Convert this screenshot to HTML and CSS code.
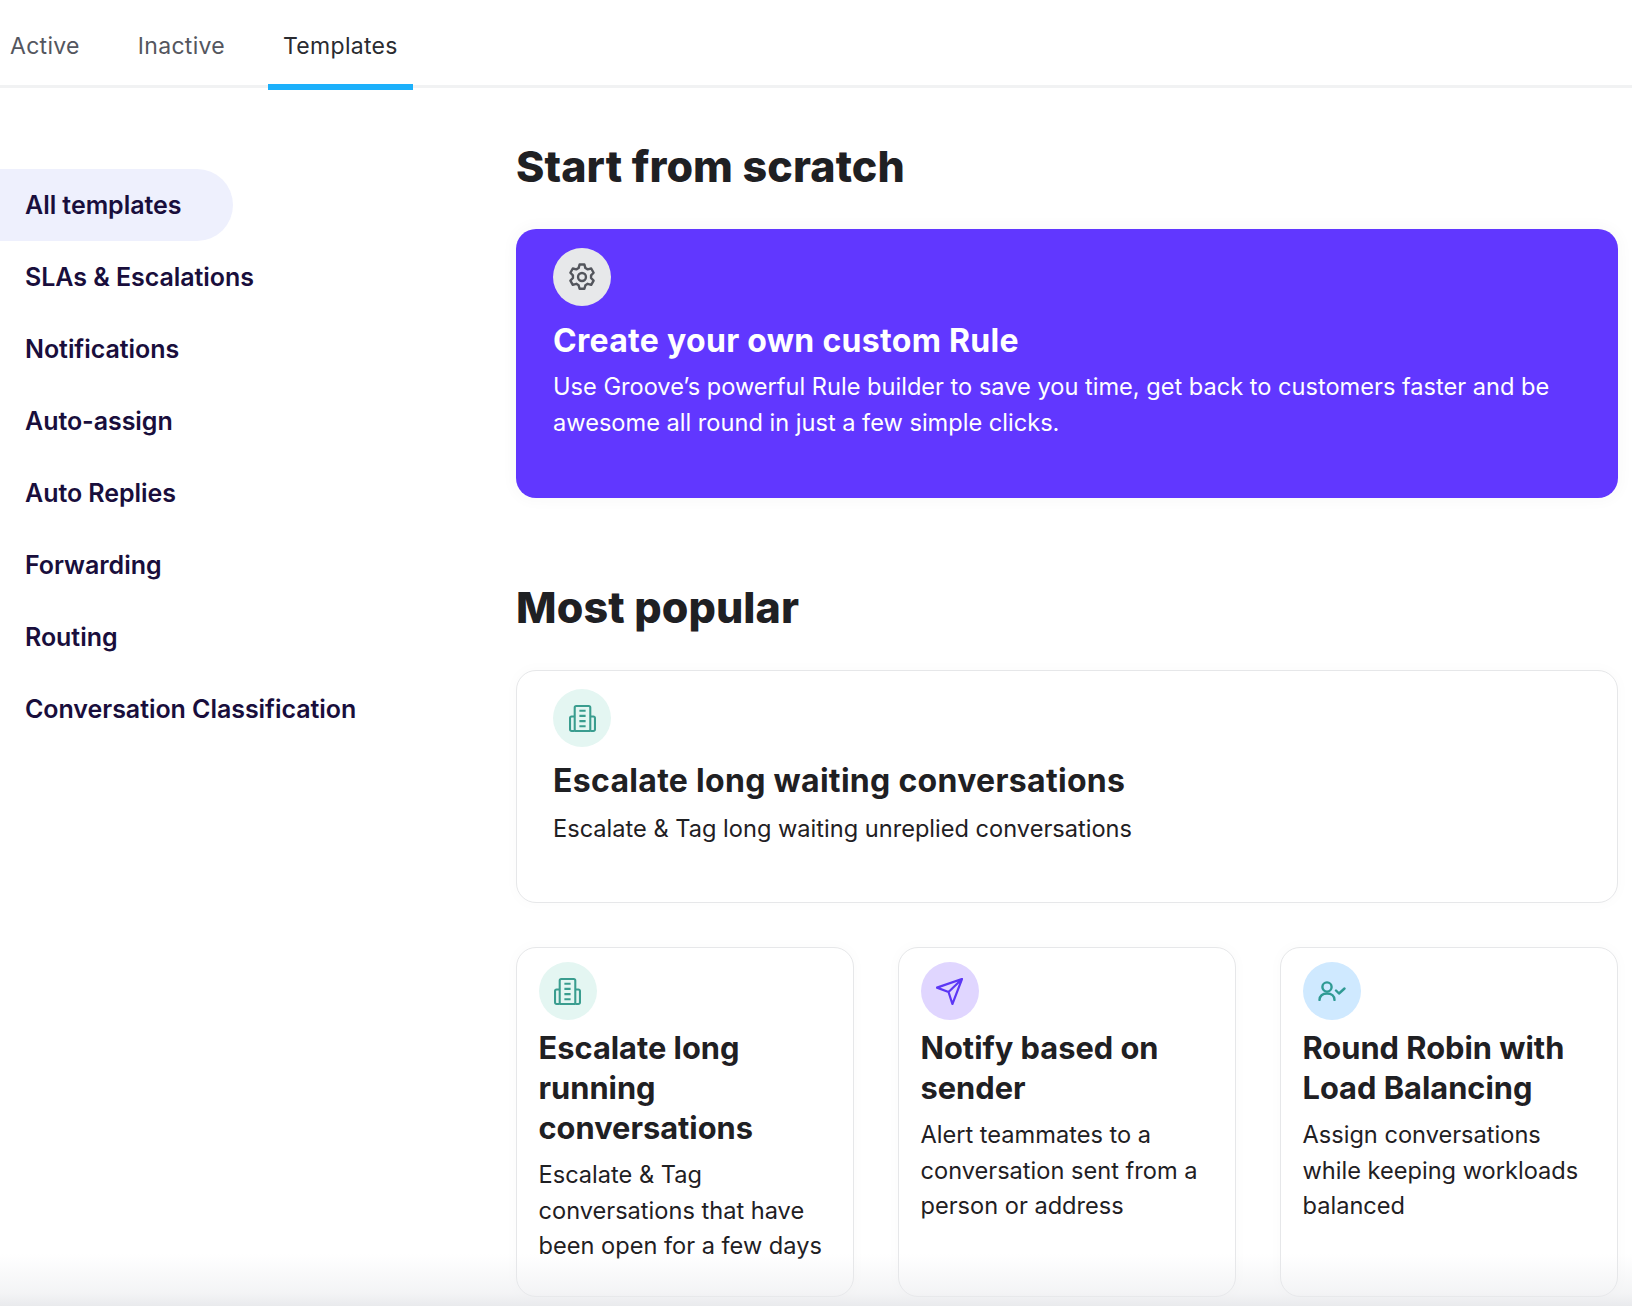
FILE: index.html
```html
<!DOCTYPE html>
<html lang="en">
<head>
<meta charset="utf-8">
<title>Rules templates</title>
<link rel="stylesheet" href="styles.css">
</head>
<body>
<nav class="tabs">
  <a class="tab">Active</a>
  <a class="tab">Inactive</a>
  <a class="tab current">Templates</a>
</nav>
<div class="layout">
  <aside class="side">
    <a class="side-item selected">All templates</a>
    <a class="side-item">SLAs &amp; Escalations</a>
    <a class="side-item">Notifications</a>
    <a class="side-item">Auto-assign</a>
    <a class="side-item">Auto Replies</a>
    <a class="side-item">Forwarding</a>
    <a class="side-item">Routing</a>
    <a class="side-item">Conversation Classification</a>
  </aside>
  <main class="main">
    <h2 class="section-title">Start from scratch</h2>
    <article class="card wide hero">
      <span class="badge badge-grey">
        <svg viewBox="0 0 24 24" class="icon icon-gear"><path d="M10.300 3.200h3.400l.7 2.500 1.600.9 2.500-.6 1.700 3-1.800 1.800v1.900l1.800 1.800-1.700 3-2.500-.7-1.600 1-.7 2.500h-3.400l-.7-2.500-1.600-1-2.500.7-1.700-3 1.800-1.800v-1.900L3.800 9l1.700-3 2.500.6 1.600-.9z" fill="none" stroke="#53555c" stroke-width="1.700" stroke-linejoin="round"/><circle cx="12" cy="12" r="2.800" fill="none" stroke="#53555c" stroke-width="1.700"/></svg>
      </span>
      <h3 class="card-title">Create your own custom Rule</h3>
      <p class="card-text">Use Groove’s powerful Rule builder to save you time, get back to customers faster and be awesome all round in just a few simple clicks.</p>
    </article>
    <h2 class="section-title second">Most popular</h2>
    <article class="card wide plain">
      <span class="badge badge-green">
        <svg viewBox="0 0 26 26" class="icon"><g fill="none" stroke="#3a9d8f" stroke-width="2" stroke-linejoin="round"><rect x="5.500" y="1" width="15" height="24" rx="1.500"/><path d="M5.500 11H2.500A1.500 1.500 0 0 0 1 12.500V23.500A1.500 1.500 0 0 0 2.500 25H5.500M20.500 11h3A1.500 1.500 0 0 1 25 12.500V23.500A1.500 1.500 0 0 1 23.500 25h-3M10 5.500h6M10 10.500h6M10 15.500h6M10 20.500h6"/></g></svg>
      </span>
      <h3 class="card-title">Escalate long waiting conversations</h3>
      <p class="card-text">Escalate &amp; Tag long waiting unreplied conversations</p>
    </article>
    <div class="grid">
      <article class="card small plain">
        <span class="badge badge-green">
          <svg viewBox="0 0 26 26" class="icon"><g fill="none" stroke="#3a9d8f" stroke-width="2" stroke-linejoin="round"><rect x="5.500" y="1" width="15" height="24" rx="1.500"/><path d="M5.500 11H2.500A1.500 1.500 0 0 0 1 12.500V23.500A1.500 1.500 0 0 0 2.500 25H5.500M20.500 11h3A1.500 1.500 0 0 1 25 12.500V23.500A1.500 1.500 0 0 1 23.500 25h-3M10 5.500h6M10 10.500h6M10 15.500h6M10 20.500h6"/></g></svg>
        </span>
        <h3 class="card-title">Escalate long running conversations</h3>
        <p class="card-text">Escalate &amp; Tag conversations that have been open for a few days</p>
      </article>
      <article class="card small plain">
        <span class="badge badge-violet">
          <svg viewBox="0 0 28 28" class="icon"><path d="M1 10 27 1 17 27 13 14.500zM27 1 13 14.500" fill="none" stroke="#5c37f5" stroke-width="2.300" stroke-linejoin="round" stroke-linecap="round"/></svg>
        </span>
        <h3 class="card-title">Notify based on sender</h3>
        <p class="card-text">Alert teammates to a conversation sent from a person or address</p>
      </article>
      <article class="card small plain">
        <span class="badge badge-blue">
          <svg viewBox="0 0 28 20" class="icon icon-user"><g fill="none" stroke="#2f9a94" stroke-width="2.400" stroke-linecap="round" stroke-linejoin="round"><circle cx="9" cy="6" r="4.600"/><path d="M1.500 19c0-4 3-6.500 7.500-6.500s7.500 2.500 7.500 6.500"/><path d="m18 9.500 3 3 5.500-5"/></g></svg>
        </span>
        <h3 class="card-title">Round Robin with Load Balancing</h3>
        <p class="card-text">Assign conversations while keeping workloads balanced</p>
      </article>
    </div>
  </main>
</div>
<div class="fade"></div>
</body>
</html>
```
FILE: styles.css
```css
* { box-sizing: border-box; }
html, body { margin: 0; height: 1306px; overflow: hidden; background: #fff; }
body { font-family: "Inter", sans-serif; color: #1f2023; position: relative; }

.tabs { display: flex; height: 88px; border-bottom: 3px solid #f1f2f3; margin-left: -5px; gap: 28px; }
.tab { font-size: 23px; line-height: 26px; padding: 33px 15px 0; color: #54565e; letter-spacing: .3px; }
.tab.current { color: #2a2b30; height: 90px; border-bottom: 6px solid #1cb0fb; }

.layout { display: flex; }
.side { width: 516px; padding-top: 81px; flex: none; display: flex; flex-direction: column; align-items: flex-start; }
.side-item { height: 72px; line-height: 72px; padding: 0 50px 0 25px; font-size: 25px; font-weight: 600; letter-spacing: -.05px; color: #190e3c; white-space: nowrap; }
.side-item.selected { width: 233px; background: #eef0fd; border-radius: 0 36px 36px 0; }

.main { width: 1102px; padding-top: 50px; }
.section-title { margin: 0 0 35px; font-size: 43px; line-height: 56px; font-weight: 800; letter-spacing: .1px; color: #1f2023; }
.section-title.second { margin: 0 0 35px; }

.card { border-radius: 20px; display: block; }
.wide { padding: 19px 37px 0; }
.hero { height: 269px; background: #6137ff; color: #fff; box-shadow: 0 0 12px 6px rgba(0,0,0,.018); margin-bottom: 81px; }
.plain { background: #fff; border: 1px solid #e6e7e9; box-shadow: 0 0 10px 5px rgba(0,0,0,.012); }
.wide.plain { height: 233px; padding: 18px 36px 0; margin-bottom: 44px; }

.badge { width: 58px; height: 58px; border-radius: 50%; display: flex; align-items: center; justify-content: center; }
.badge-grey { background: #e7e8ea; }
.badge-green { background: #e4f6f2; }
.badge-violet { background: #e0d6ff; }
.badge-blue { background: #cfe9ff; }
.icon { width: 27px; height: 27px; display: block; }
.icon-gear { width: 34px; height: 34px; }
.icon-user { width: 28px; height: 20px; }

.card-title { margin: 15px 0 8px; font-size: 32px; line-height: 40px; font-weight: 700; letter-spacing: .3px; }
.card-text { margin: 0; font-size: 23.600px; line-height: 35.500px; font-weight: 400; }
.wide.plain .card-title { margin-top: 14px; }
.wide.plain .card-text { padding-top: 2px; }

.grid { display: grid; grid-template-columns: repeat(3, 338px); gap: 44px; }
.small { height: 350px; padding: 14px 21.500px 0; }
.small .card-title { margin: 8px 0 9px; font-size: 30.800px; letter-spacing: 0; }

.fade { position: absolute; left: 0; right: 0; bottom: 0; height: 52px; background: linear-gradient(to bottom, rgba(232,233,236,0), rgba(232,233,236,.5) 75%, rgba(232,233,236,.95)); pointer-events: none; }
```
